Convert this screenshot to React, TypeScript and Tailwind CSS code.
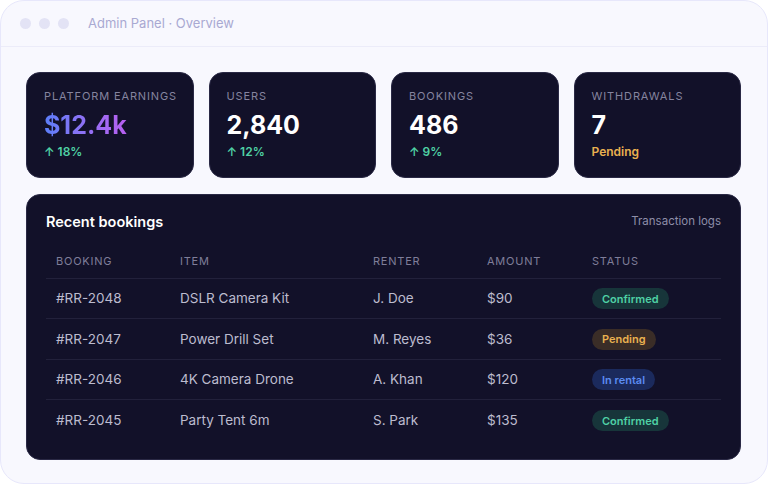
import React from "react";

type Status = "Confirmed" | "Pending" | "In rental";

interface Booking {
  id: string;
  item: string;
  renter: string;
  amount: string;
  status: Status;
}

const stats = [
  { label: "Platform earnings", value: "$12.4k", note: "↑ 18%", gradient: true },
  { label: "Users", value: "2,840", note: "↑ 12%" },
  { label: "Bookings", value: "486", note: "↑ 9%" },
  { label: "Withdrawals", value: "7", note: "Pending", warn: true },
];

const bookings: Booking[] = [
  { id: "#RR-2048", item: "DSLR Camera Kit", renter: "J. Doe", amount: "$90", status: "Confirmed" },
  { id: "#RR-2047", item: "Power Drill Set", renter: "M. Reyes", amount: "$36", status: "Pending" },
  { id: "#RR-2046", item: "4K Camera Drone", renter: "A. Khan", amount: "$120", status: "In rental" },
  { id: "#RR-2045", item: "Party Tent 6m", renter: "S. Park", amount: "$135", status: "Confirmed" },
];

const badgeStyles: Record<Status, string> = {
  Confirmed: "bg-[#17353a] text-[#4fd1a5]",
  Pending: "bg-[#3a2d27] text-[#e9b150]",
  "In rental": "bg-[#1b2a5c] text-[#5b8cf2]",
};

const cols = "grid grid-cols-[124px_193px_114px_105px_1fr] items-center";

const App = () => {
  return (
    <div className="w-[768px] h-[486px] bg-white font-['Inter','Liberation_Sans',sans-serif]">
      <div className="w-[768px] h-[484px] rounded-[24px] border border-[#e7e7fb] bg-[#f8f8fe] overflow-hidden">
        {/* title bar */}
        <div className="h-[46px] flex items-center border-b border-[#ececf9] pl-[19px]">
          <div className="flex gap-[8px]">
            <span className="w-[11px] h-[11px] rounded-full bg-[#e3e3f5]" />
            <span className="w-[11px] h-[11px] rounded-full bg-[#e3e3f5]" />
            <span className="w-[11px] h-[11px] rounded-full bg-[#e3e3f5]" />
          </div>
          <span className="ml-[19px] text-[13px] text-[#a9a9d2]">
            Admin Panel · Overview
          </span>
        </div>

        <div className="pl-[25px] pr-[26px] pt-[25px]">
          {/* stat cards */}
          <div className="grid grid-cols-4 gap-[15px]">
            {stats.map((s) => (
              <div
                key={s.label}
                className="h-[106px] rounded-[14px] bg-[#121129] border border-[#2a2945] pl-[17px] pt-[15px]"
              >
                <div className="text-[11px] uppercase tracking-[0.08em] text-[#85849f]">
                  {s.label}
                </div>
                <div
                  className={
                    s.gradient
                      ? "mt-[4px] text-[25px] font-bold leading-[32px] bg-gradient-to-r from-[#5a7ef9] to-[#b75ef0] bg-clip-text text-transparent w-fit"
                      : "mt-[4px] text-[25px] font-bold leading-[32px] text-white"
                  }
                >
                  {s.value}
                </div>
                <div
                  className={
                    s.warn
                      ? "mt-[2px] text-[12px] font-semibold text-[#e9b150]"
                      : "mt-[2px] text-[12px] font-semibold text-[#4fd1a5]"
                  }
                >
                  {s.note}
                </div>
              </div>
            ))}
          </div>

          {/* bookings table */}
          <div className="mt-[16px] h-[266px] rounded-[14px] bg-[#121129] border border-[#2a2945] px-[19px] pt-[16px]">
            <div className="flex items-center justify-between">
              <h2 className="text-[14.5px] font-semibold text-white">Recent bookings</h2>
              <span className="text-[11.5px] text-[#8e8ea8]">Transaction logs</span>
            </div>

            <div className={`${cols} mt-[12px] h-[34px] border-b border-[#22213b] text-[11px] uppercase tracking-[0.07em] text-[#7f7e99]`}>
              <span className="pl-[10px]">Booking</span>
              <span className="pl-[10px]">Item</span>
              <span className="pl-[10px]">Renter</span>
              <span className="pl-[10px]">Amount</span>
              <span className="pl-[10px]">Status</span>
            </div>

            {bookings.map((b, i) => (
              <div
                key={b.id}
                className={`${cols} h-[40.5px] text-[13.5px] text-[#bdbccf] ${
                  i < bookings.length - 1 ? "border-b border-[#22213b]" : ""
                }`}
              >
                <span className="pl-[10px]">{b.id}</span>
                <span className="pl-[10px]">{b.item}</span>
                <span className="pl-[10px]">{b.renter}</span>
                <span className="pl-[10px]">{b.amount}</span>
                <span className="pl-[10px]">
                  <span
                    className={`inline-flex h-[21px] items-center rounded-full px-[10px] text-[11px] font-semibold ${badgeStyles[b.status]}`}
                  >
                    {b.status}
                  </span>
                </span>
              </div>
            ))}
          </div>
        </div>
      </div>
    </div>
  );
};

export default App;
